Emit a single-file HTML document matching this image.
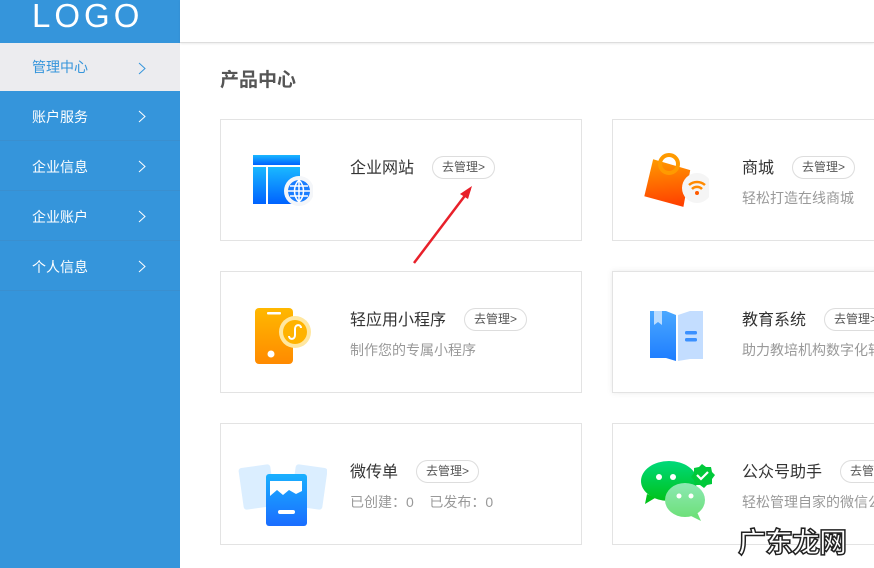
<!DOCTYPE html>
<html><head><meta charset="utf-8"><style>
*{margin:0;padding:0;box-sizing:border-box}
body{width:874px;height:568px;overflow:hidden;background:#fff;font-family:"Liberation Sans","Noto Sans CJK SC",sans-serif;position:relative}
.side{position:absolute;left:0;top:0;width:180px;height:568px;background:#3595db}
.logo{position:absolute;left:32px;top:-4px;color:#fff;font-size:33px;letter-spacing:4px;line-height:40px}
.hdr{position:absolute;left:180px;top:0;width:694px;height:43px;background:#fff;border-bottom:1px solid #ddd;box-shadow:0 1px 2px rgba(0,0,0,.08)}
.item{position:absolute;left:0;width:180px;height:50px;color:#fff;font-size:14px;line-height:52px;padding-left:32px;border-bottom:1px solid #3a8fcf}
.item.act{background:#ececef;color:#3595db;height:48px;line-height:48px;border:none}
.item svg{position:absolute;left:138px;top:19px}
h2{position:absolute;left:220px;top:65px;font-size:19px;color:#555;font-weight:bold}
.card{position:absolute;width:362px;height:122px;border:1px solid #e3e3e3;background:#fff}
.card.r{width:270px;border-right:none}
.t{position:absolute;left:129px;top:34px;font-size:16px;color:#333;white-space:nowrap}
.b{display:inline-block;margin-left:18px;border:1px solid #ddd;border-radius:12px;height:23px;line-height:21px;padding:0 9px;font-size:12px;color:#555;vertical-align:2px}
.d{position:absolute;left:129px;top:68px;font-size:14px;color:#999;white-space:nowrap}
.ic{position:absolute;left:28px;top:32px}
</style></head><body>
<div class="side">
<div class="logo">LOGO</div>
<div class="item act" style="top:43px">管理中心<svg width="8" height="13"><path d="M1 1l6 5.5-6 5.5" stroke="#3595db" fill="none"/></svg></div>
<div class="item" style="top:91px">账户服务<svg width="8" height="13"><path d="M1 1l6 5.5-6 5.5" stroke="#fff" fill="none"/></svg></div>
<div class="item" style="top:141px">企业信息<svg width="8" height="13"><path d="M1 1l6 5.5-6 5.5" stroke="#fff" fill="none"/></svg></div>
<div class="item" style="top:191px">企业账户<svg width="8" height="13"><path d="M1 1l6 5.5-6 5.5" stroke="#fff" fill="none"/></svg></div>
<div class="item" style="top:241px">个人信息<svg width="8" height="13"><path d="M1 1l6 5.5-6 5.5" stroke="#fff" fill="none"/></svg></div>
</div>
<div class="hdr"></div>
<h2>产品中心</h2>

<div class="card" style="left:220px;top:119px">
<svg class="ic" width="64" height="60" viewBox="0 0 64 60"><defs><linearGradient id="g1" x1="0" y1="0" x2="0" y2="1"><stop offset="0" stop-color="#1ab8ff"/><stop offset="1" stop-color="#0062ff"/></linearGradient></defs>
<rect x="4" y="3" width="47" height="10" fill="url(#g1)"/><rect x="4" y="15" width="13" height="37" fill="url(#g1)"/><rect x="19" y="15" width="32" height="37" fill="url(#g1)"/>
<circle cx="50" cy="39" r="15" fill="#f4f6f9"/><circle cx="50" cy="39" r="11" fill="#1a7dff"/><path d="M39 39h22M50 28v22M41 34h18M41 44h18M50 28c-6 6-6 16 0 22M50 28c6 6 6 16 0 22" stroke="#fff" stroke-width="1.5" fill="none"/></svg>
<div class="t">企业网站<span class="b">去管理&gt;</span></div>
</div>

<div class="card r" style="left:612px;top:119px">
<svg class="ic" width="70" height="64" viewBox="0 0 70 64" style="left:26px;top:30px"><defs><linearGradient id="g2" x1="0" y1="0" x2="0" y2="1"><stop offset="0" stop-color="#ff9a00"/><stop offset="1" stop-color="#ff3c00"/></linearGradient></defs>
<path d="M16 8l36 14-10 36-38-14z" fill="url(#g2)" transform="rotate(-5 30 30)"/><circle cx="30" cy="14" r="9" fill="none" stroke="#ff9a00" stroke-width="4"/>
<circle cx="58" cy="38" r="15" fill="#f5f5f5"/><path d="M50 35a12 12 0 0 1 16 0M53 39a7 7 0 0 1 10 0" stroke="#ff8a00" stroke-width="2.5" fill="none"/><circle cx="58" cy="43" r="2" fill="#ff5a00"/></svg>
<div class="t">商城<span class="b">去管理&gt;</span></div>
<div class="d">轻松打造在线商城</div>
</div>

<div class="card" style="left:220px;top:271px">
<svg class="ic" width="64" height="60" viewBox="0 0 64 60" style="left:32px;top:34px"><defs><linearGradient id="g3" x1="0" y1="0" x2="0" y2="1"><stop offset="0" stop-color="#ffb800"/><stop offset="1" stop-color="#ff8a00"/></linearGradient></defs>
<rect x="2" y="2" width="38" height="56" rx="4" fill="url(#g3)"/><rect x="14" y="6" width="14" height="2.5" rx="1" fill="#fff"/><circle cx="18" cy="48" r="3.5" fill="#fff"/>
<circle cx="42" cy="26" r="16" fill="#ffe7a0"/><circle cx="42" cy="26" r="12" fill="#ffb300"/><path d="M36 30c0 4 6 4 6-1v-6c0-5 6-5 6-1" stroke="#fff" stroke-width="2" fill="none"/></svg>
<div class="t">轻应用小程序<span class="b">去管理&gt;</span></div>
<div class="d">制作您的专属小程序</div>
</div>

<div class="card r" style="left:612px;top:271px;box-shadow:0 0 6px rgba(0,0,0,.08)">
<svg class="ic" width="64" height="60" viewBox="0 0 64 60" style="left:36px;top:38px"><defs><linearGradient id="g4" x1="0" y1="0" x2="0" y2="1"><stop offset="0" stop-color="#4aa8ff"/><stop offset="1" stop-color="#1e7dff"/></linearGradient></defs>
<path d="M1 1h16l10 4v46l-10-3H1z" fill="url(#g4)"/><path d="M5 1h8v14l-4-3-4 3z" fill="#b9dcff"/><path d="M29 5l12-4h13v48H41l-12 2z" fill="#c3ddff"/><rect x="36" y="21" width="12" height="3.5" rx="1.5" fill="#3a90ff"/><rect x="36" y="28" width="12" height="3.5" rx="1.5" fill="#3a90ff"/></svg>
<div class="t">教育系统<span class="b">去管理&gt;</span></div>
<div class="d">助力教培机构数字化转型</div>
</div>

<div class="card" style="left:220px;top:423px">
<svg class="ic" width="90" height="70" viewBox="0 0 90 70" style="left:16px;top:36px"><defs><linearGradient id="g5" x1="0" y1="0" x2="0" y2="1"><stop offset="0" stop-color="#1ab0ff"/><stop offset="1" stop-color="#1a6dff"/></linearGradient></defs>
<rect x="4" y="6" width="32" height="42" rx="3" fill="#dbeeff" transform="rotate(-8 20 27)"/><rect x="56" y="6" width="32" height="42" rx="3" fill="#dbeeff" transform="rotate(8 72 27)"/>
<rect x="29" y="14" width="41" height="52" rx="3" fill="url(#g5)"/><path d="M33 36l7-6 6 5 6-5 7 4 6-3V21H33z" fill="#fff"/><rect x="41" y="50" width="17" height="4" rx="2" fill="#fff"/></svg>
<div class="t">微传单<span class="b">去管理&gt;</span></div>
<div class="d">已创建：0&nbsp;&nbsp;&nbsp;&nbsp;已发布：0</div>
</div>

<div class="card r" style="left:612px;top:423px">
<svg class="ic" width="80" height="64" viewBox="0 0 80 64" style="left:24px;top:36px"><defs><linearGradient id="g6" x1="0" y1="0" x2="0" y2="1"><stop offset="0" stop-color="#00d97a"/><stop offset="1" stop-color="#00c21a"/></linearGradient><linearGradient id="g7" x1="0" y1="0" x2="0" y2="1"><stop offset="0" stop-color="#8de9b4"/><stop offset="1" stop-color="#6ee07a"/></linearGradient></defs>
<ellipse cx="32" cy="21" rx="28" ry="20" fill="url(#g6)"/><path d="M10 34l-2 10 10-6z" fill="#00c21a"/><circle cx="22" cy="17" r="3" fill="#fff"/><circle cx="36" cy="17" r="3" fill="#fff"/>
<ellipse cx="48" cy="40" rx="20" ry="17" fill="url(#g7)"/><path d="M60 52l4 9-10-5z" fill="#6ee07a"/><circle cx="42" cy="36" r="2.5" fill="#fff"/><circle cx="54" cy="36" r="2.5" fill="#fff"/>
<path d="M65 4l4 3 5 0 1 5 3 3-3 4 0 5-5 1-3 3-4-3-5 0-1-5-3-3 3-4 0-5 5-1z" fill="#00c93a"/><path d="M60 15l4 4 7-7" stroke="#fff" stroke-width="2.2" fill="none"/></svg>
<div class="t">公众号助手<span class="b">去管理&gt;</span></div>
<div class="d">轻松管理自家的微信公众号</div>
</div>

<svg style="position:absolute;left:410px;top:183px" width="64" height="84"><path d="M4 80L60 6" stroke="#e8202a" stroke-width="2.5"/><path d="M62 3l-12 8 8 5z" fill="#e8202a"/></svg>
<div style="position:absolute;left:738px;top:521px;font-size:28px;font-weight:bold;color:#fff;-webkit-text-stroke:1.5px #222;letter-spacing:-1px">广东龙网</div>
</body></html>
